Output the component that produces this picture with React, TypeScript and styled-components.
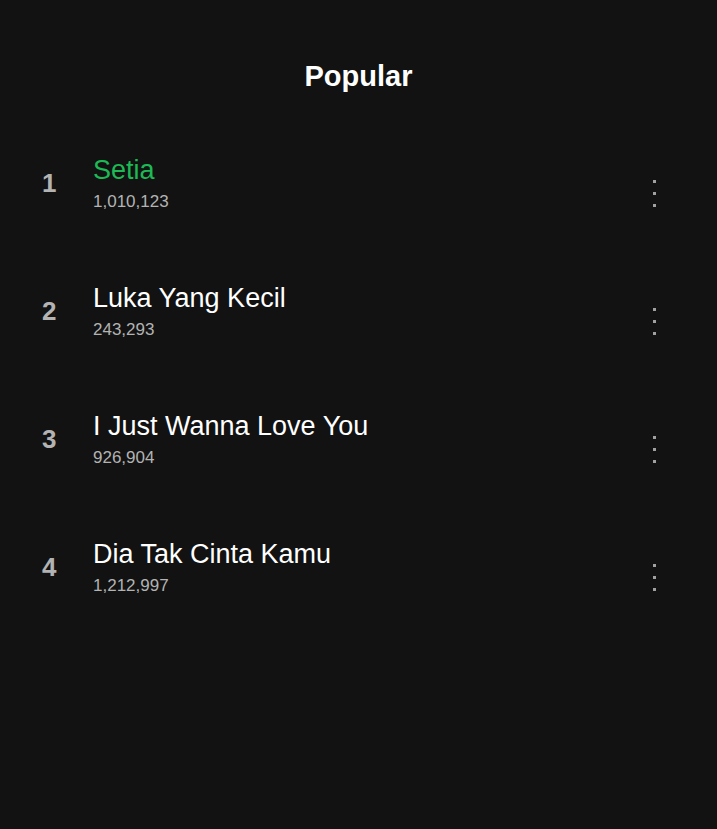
import styled, { createGlobalStyle } from "styled-components";

const Global = createGlobalStyle`
  html, body {
    margin: 0;
    padding: 0;
    background: #121212;
  }
  body {
    font-family: "Liberation Sans", Arial, sans-serif;
    color: #fff;
  }
`;

const Page = styled.main`
  width: 717px;
  min-height: 829px;
  background: #121212;
  padding-top: 58px;
  box-sizing: border-box;
`;

const Title = styled.h1`
  margin: 0 0 25px;
  text-align: center;
  font-size: 29px;
  font-weight: 700;
  line-height: 36px;
  color: #fff;
`;

const List = styled.ol`
  list-style: none;
  margin: 0;
  padding: 0;
`;

const Row = styled.li`
  display: flex;
  align-items: center;
  height: 128px;
  padding: 0 51px 0 42px;
  box-sizing: border-box;
`;

const Rank = styled.span`
  width: 51px;
  font-size: 26px;
  font-weight: 700;
  color: #b3b3b3;
`;

const Info = styled.div`
  flex: 1;
  display: flex;
  flex-direction: column;
  gap: 6px;
`;

const Name = styled.span<{ $active?: boolean }>`
  font-size: 27px;
  line-height: 32px;
  color: ${(p) => (p.$active ? "#1db954" : "#fff")};
`;

const Plays = styled.span`
  font-size: 17px;
  line-height: 20px;
  color: #b3b3b3;
`;

const More = styled.button`
  background: none;
  border: 0;
  padding: 0;
  margin-top: 20px;
  width: 24px;
  display: flex;
  flex-direction: column;
  align-items: center;
  gap: 9px;

  span {
    width: 3px;
    height: 3px;
    background: #a0a0a0;
  }
`;

const tracks = [
  { name: "Setia", plays: "1,010,123" },
  { name: "Luka Yang Kecil", plays: "243,293" },
  { name: "I Just Wanna Love You", plays: "926,904" },
  { name: "Dia Tak Cinta Kamu", plays: "1,212,997" },
];

export default function App() {
  return (
    <Page>
      <Global />
      <Title>Popular</Title>
      <List>
        {tracks.map((t, i) => (
          <Row key={t.name}>
            <Rank>{i + 1}</Rank>
            <Info>
              <Name $active={i === 0}>{t.name}</Name>
              <Plays>{t.plays}</Plays>
            </Info>
            <More aria-label="More">
              <span />
              <span />
              <span />
            </More>
          </Row>
        ))}
      </List>
    </Page>
  );
}
